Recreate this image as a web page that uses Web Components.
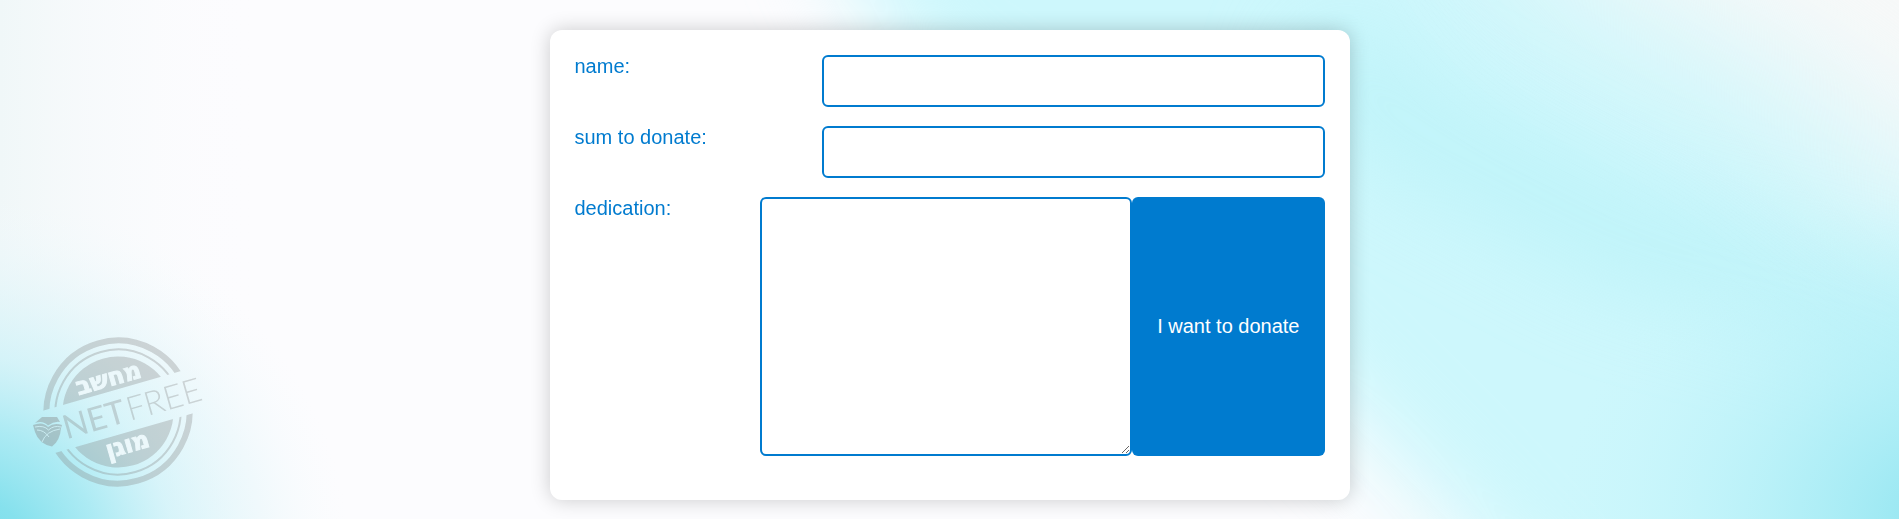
<!DOCTYPE html>
<html lang="en">
<head>
<meta charset="utf-8">
<meta name="viewport" content="width=device-width, initial-scale=1">
<title>Donate</title>
<style>
  html, body { margin: 0; min-height: 100%; }
  body { font: 20px/23px "Liberation Sans", Arial, sans-serif; color: #007bcf; background: #fcfcfe; }
</style>
</head>
<body>
<donate-page>
  <donate-form>
    <form-field label="name:" kind="text"></form-field>
    <form-field label="sum to donate:" kind="text"></form-field>
    <form-field label="dedication:" kind="area"><action-button>I want to donate</action-button></form-field>
  </donate-form>
</donate-page>

<script>
class DonatePage extends HTMLElement {
  constructor() {
    super();
    this.attachShadow({ mode: 'open' }).innerHTML = `
      <style>
        :host { display: block; position: relative; }
        main { position: relative; padding: 30px 16px 19px; }
      </style>
      <soft-backdrop></soft-backdrop>
      <main><slot></slot></main>
      <netfree-stamp></netfree-stamp>`;
  }
}

class SoftBackdrop extends HTMLElement {
  constructor() {
    super();
    this.attachShadow({ mode: 'open' }).innerHTML = `
      <style>
        :host { display: block; position: fixed; inset: 0; }
        svg { display: block; width: 100%; height: 100%; }
      </style>
      <svg viewBox="0 0 1899 519" preserveAspectRatio="none" aria-hidden="true">
        <defs>
          <filter id="b" filterUnits="userSpaceOnUse" x="-300" y="-300" width="2500" height="1120" color-interpolation-filters="sRGB"><feGaussianBlur stdDeviation="46"/></filter>
          <filter id="w" filterUnits="userSpaceOnUse" x="-300" y="-400" width="2700" height="1320" color-interpolation-filters="sRGB"><feGaussianBlur stdDeviation="80"/></filter>
          <radialGradient id="bl" gradientUnits="userSpaceOnUse" cx="0" cy="0" r="1" gradientTransform="translate(-40 560) scale(390 370)">
            <stop offset="0" stop-color="#76dcea"/><stop offset=".18" stop-color="#86e1ed"/>
            <stop offset=".36" stop-color="#a4e9f3" stop-opacity=".9"/><stop offset=".55" stop-color="#c8f1f8" stop-opacity=".7"/>
            <stop offset=".78" stop-color="#e4f6fa" stop-opacity=".5"/>
            <stop offset="1" stop-color="#f5fbfd" stop-opacity="0"/>
          </radialGradient>
          <radialGradient id="br" gradientUnits="userSpaceOnUse" cx="0" cy="0" r="1" gradientTransform="translate(1950 520) scale(390 330)">
            <stop offset="0" stop-color="#8fe4f0"/><stop offset=".4" stop-color="#a8ecf5" stop-opacity=".7"/>
            <stop offset="1" stop-color="#c6f5fb" stop-opacity="0"/>
          </radialGradient>
          <linearGradient id="l"><stop offset="0" stop-color="#f0f7f8"/><stop offset="1" stop-color="#fcfcfe" stop-opacity="0"/></linearGradient>
        </defs>
        <rect width="1899" height="519" fill="#fcfcfe"/>
        <rect width="260" height="519" fill="url(#l)"/>
        <path d="M780-200H1480L2200 160V800H1700L1440 510 1330 400 1100 200 900 70Z" fill="#cdf7fc" filter="url(#b)"/>
        <path d="M1310 40 1400 120 1620 235 2000 340" fill="none" stroke="#b4f1f7" stroke-width="90" opacity=".6" filter="url(#b)"/>
        <path d="M1430-300 1560-30 1750 60 1900 180 2000 240 2400 300V-300Z" fill="#f7f8f8" filter="url(#w)"/>
        <rect width="500" height="519" fill="url(#bl)"/>
        <rect x="1500" width="399" height="519" fill="url(#br)"/>
      </svg>`;
  }
}

class DonateForm extends HTMLElement {
  constructor() {
    super();
    this.attachShadow({ mode: 'open' }).innerHTML = `
      <style>
        :host { display: block; max-width: 800px; margin: 0 auto; }
        form { display: grid; gap: 19px; padding: 25px 25px 44px; background: #fff; border-radius: 12px; box-shadow: 0 0 20px rgba(0,0,0,.2); }
      </style>
      <form><slot></slot></form>`;
  }
}

class FormField extends HTMLElement {
  connectedCallback() {
    const area = this.getAttribute('kind') === 'area';
    this.attachShadow({ mode: 'open' }).innerHTML = `
      <style>
        :host { display: flex; align-items: stretch; }
        label { flex: 1; }
        input, textarea { box-sizing: border-box; margin: 0; padding: 12px; border: 2px solid #007bcf; border-radius: 6px; background: #fff; font: inherit; outline: 0; }
        input { width: 67%; height: 52px; }
        textarea { width: 372px; height: 259px; max-width: 60%; }
      </style>
      <label for="control">${this.getAttribute('label')}</label>
      ${area ? '<textarea id="control"></textarea>' : '<input id="control" type="text">'}
      <slot></slot>`;
  }
}

class ActionButton extends HTMLElement {
  constructor() {
    super();
    this.attachShadow({ mode: 'open' }).innerHTML = `
      <style>
        :host { display: flex; }
        button { margin: 0; padding: 0 25px; border: 0; border-radius: 6px; background: #007bcf; color: #fff; font: inherit; cursor: pointer; }
      </style>
      <button type="button"><slot></slot></button>`;
  }
}

class NetfreeStamp extends HTMLElement {
  constructor() {
    super();
    this.attachShadow({ mode: 'open' }).innerHTML = `
      <style>
        :host { display: block; position: fixed; left: 28px; bottom: 29px; pointer-events: none; }
        svg { display: block; }
        .he { font: 700 24px "DejaVu Sans", sans-serif; fill: #ecf8fb; stroke: #ecf8fb; stroke-width: 1; }
        .net { font: 400 33px Lato, sans-serif; }
        .free { font: 300 33px Lato, sans-serif; }
      </style>
      <svg width="180" height="154" viewBox="28 336 180 154" role="img" aria-label="NetFree">
        <defs>
          <clipPath id="halves"><path d="M-90-90H90V-22H-90ZM-90 22H90V90H-90Z"/></clipPath>
        </defs>
        <g transform="translate(118 412) rotate(-16)">
          <g opacity=".32" fill="#858585" stroke="#858585">
            <g clip-path="url(#halves)">
              <circle r="71.500" fill="none" stroke-width="6"/>
              <circle r="62.500" fill="none" stroke-width="2"/>
              <circle r="55.500" stroke="none"/>
            </g>
            <g stroke="none">
              <text class="net" x="-57" y="12">NET</text>
              <text class="free" x="9" y="12">FREE</text>
            </g>
          </g>
          <text class="he" x="0" y="-27" text-anchor="middle">מחשב</text>
          <text class="he" x="0" y="42" text-anchor="middle">מוגן</text>
        </g>
        <path d="M42 417H57L60 422Q54 421 48 425.500Q43 420 35 423ZM33 425Q43 421 48 427Q54 422 62 425L61 428Q60 441 52 446.500Q39 444 35 432Z" fill="#858585" opacity=".4"/>
        <path d="M35 427Q44 425 48.500 430Q54 425 61 427M37 430Q44 430 49 437M42 442Q46 431 60 429" fill="none" stroke="#cdeef4" stroke-width=".9"/>
      </svg>`;
  }
}

customElements.define('soft-backdrop', SoftBackdrop);
customElements.define('netfree-stamp', NetfreeStamp);
customElements.define('donate-page', DonatePage);
customElements.define('donate-form', DonateForm);
customElements.define('form-field', FormField);
customElements.define('action-button', ActionButton);
</script>
</body>
</html>
